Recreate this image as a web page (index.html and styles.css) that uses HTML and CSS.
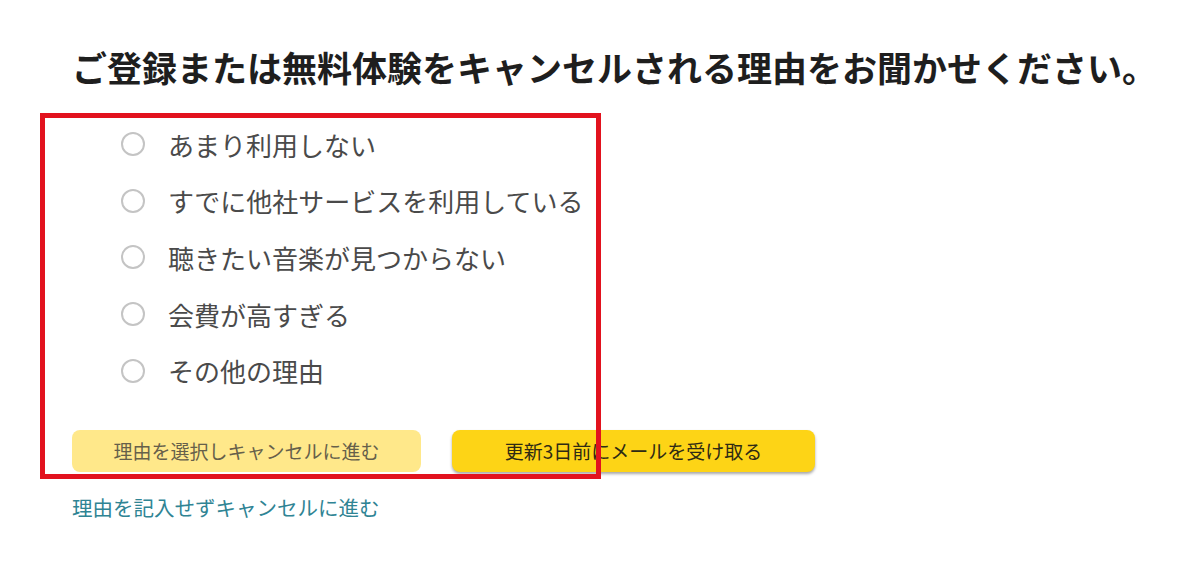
FILE: index.html
```html
<!DOCTYPE html>
<html lang="ja">
<head>
  <meta charset="UTF-8">
  <meta name="viewport" content="width=device-width, initial-scale=1.0">
  <title>キャンセル理由</title>
  <link rel="stylesheet" href="styles.css">
</head>
<body>
  <div class="page">
    <h1>ご登録または無料体験をキャンセルされる理由をお聞かせください。</h1>

    <form class="reasons">
      <label class="reason"><input type="radio" name="reason" value="1"><span>あまり利用しない</span></label>
      <label class="reason"><input type="radio" name="reason" value="2"><span>すでに他社サービスを利用している</span></label>
      <label class="reason"><input type="radio" name="reason" value="3"><span>聴きたい音楽が見つからない</span></label>
      <label class="reason"><input type="radio" name="reason" value="4"><span>会費が高すぎる</span></label>
      <label class="reason"><input type="radio" name="reason" value="5"><span>その他の理由</span></label>

      <div class="actions">
        <button type="button" class="btn btn-disabled" disabled>理由を選択しキャンセルに進む</button>
        <button type="button" class="btn btn-primary">更新3日前にメールを受け取る</button>
      </div>
    </form>

    <a class="skip" href="#">理由を記入せずキャンセルに進む</a>

    <!-- highlight frame around the reason list -->
    <div class="highlight"></div>
  </div>
</body>
</html>
```

FILE: styles.css
```css
body {
  margin: 0;
  background: #fff;
  font-family: "Noto Sans CJK JP", "Noto Sans", sans-serif;
  color: #333;
}
.page {
  position: relative;
  padding: 46px 0 0 72px;
}
h1 {
  margin: 0;
  font-size: 35px;
  line-height: 42px;
  font-weight: 700;
  color: #1e1e1e;
  white-space: nowrap;
}
.reasons {
  margin-top: 28px;
}
.reason {
  display: flex;
  align-items: center;
  height: 56.6px;
  padding-left: 49px;
  font-size: 26px;
  color: #4a4a4a;
  cursor: pointer;
}
.reason input {
  appearance: none;
  flex: none;
  width: 24px;
  height: 24px;
  margin: 0 23px 0 0;
  border: 2px solid #c4c4c4;
  border-radius: 50%;
  background: #fff;
}
.reason input:checked {
  border: 7px solid #2a8593;
}
.actions {
  display: flex;
  gap: 31px;
  margin-top: 31px;
}
.btn {
  height: 42px;
  border: none;
  border-radius: 8px;
  font-family: inherit;
  font-size: 19px;
  padding: 0;
}
.btn-disabled {
  width: 349px;
  background: #ffe88a;
  color: #66604a;
}
.btn-primary {
  width: 363px;
  background: #fdd416;
  color: #2e2a14;
  box-shadow: 0 2px 3px rgba(0, 0, 0, 0.35);
  cursor: pointer;
}
.skip {
  display: inline-block;
  margin-top: 20px;
  font-size: 20.5px;
  color: #2f8494;
  text-decoration: none;
}
.highlight {
  position: absolute;
  left: 40px;
  top: 113px;
  width: 551px;
  height: 356px;
  border: 5px solid #e2121e;
  pointer-events: none;
}
```
